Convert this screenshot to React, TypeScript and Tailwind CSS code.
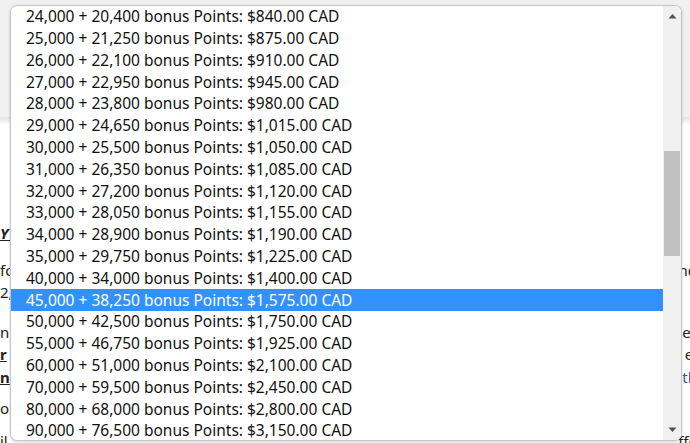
import React from 'react';

const options = [
  '24,000 + 20,400 bonus Points: $840.00 CAD',
  '25,000 + 21,250 bonus Points: $875.00 CAD',
  '26,000 + 22,100 bonus Points: $910.00 CAD',
  '27,000 + 22,950 bonus Points: $945.00 CAD',
  '28,000 + 23,800 bonus Points: $980.00 CAD',
  '29,000 + 24,650 bonus Points: $1,015.00 CAD',
  '30,000 + 25,500 bonus Points: $1,050.00 CAD',
  '31,000 + 26,350 bonus Points: $1,085.00 CAD',
  '32,000 + 27,200 bonus Points: $1,120.00 CAD',
  '33,000 + 28,050 bonus Points: $1,155.00 CAD',
  '34,000 + 28,900 bonus Points: $1,190.00 CAD',
  '35,000 + 29,750 bonus Points: $1,225.00 CAD',
  '40,000 + 34,000 bonus Points: $1,400.00 CAD',
  '45,000 + 38,250 bonus Points: $1,575.00 CAD',
  '50,000 + 42,500 bonus Points: $1,750.00 CAD',
  '55,000 + 46,750 bonus Points: $1,925.00 CAD',
  '60,000 + 51,000 bonus Points: $2,100.00 CAD',
  '70,000 + 59,500 bonus Points: $2,450.00 CAD',
  '80,000 + 68,000 bonus Points: $2,800.00 CAD',
  '90,000 + 76,500 bonus Points: $3,150.00 CAD',
];

const selected = 13;

// page text peeking out on both sides of the open list
const pageRows = [
  { h: 'h-[97px]', left: '', right: '' },
  { h: 'h-[22px]', left: <span className="font-bold italic underline">Y A</span>, right: '' },
  { h: 'h-[15px]', left: '', right: '' },
  { h: 'h-[22px]', left: 'fo', right: 'nd' },
  { h: 'h-[22px]', left: '2,', right: '' },
  { h: 'h-[18px]', left: '', right: '' },
  { h: 'h-[22px]', left: 'nis', right: 'er' },
  { h: 'h-[22px]', left: <span className="font-bold underline">r</span>, right: 'ei' },
  { h: 'h-[24px]', left: <span className="font-bold underline">n</span>, right: <span className="text-[#1a5c9a]">th</span> },
  { h: 'h-[8px]', left: '', right: '' },
  { h: 'h-[22px]', left: 'or', right: '' },
  { h: 'h-[11px]', left: '', right: '' },
  { h: 'h-[22px]', left: 'il', right: 'ffe' },
];

export default function App() {
  return (
    <div className="relative w-[690px] h-[443px] overflow-hidden bg-white text-[#222]" style={{ fontFamily: '"Noto Sans", "Open Sans", sans-serif' }}>
      {/* page behind the dropdown */}
      <div className="h-[117px] bg-[#f0f0f0]" />
      <div className="h-[8px] bg-gradient-to-b from-[#e2e2e2] to-white" />
      <div className="flex flex-col w-[697px] text-[15px] leading-[22px]">
        {pageRows.map((r, i) => (
          <div key={i} className={`${r.h} shrink-0 flex items-center justify-between`}>
            <span>{r.left}</span>
            <span>{r.right}</span>
          </div>
        ))}
      </div>

      {/* open select list */}
      <div className="absolute left-[10px] top-[5px] w-[672px] h-[436px] bg-white border border-[#c6c6c6] rounded-[7px] shadow-[0_1px_3px_rgba(0,0,0,0.18)] overflow-hidden flex">
        <div className="flex-1 flex flex-col">
          {options.map((o, i) => (
            <div
              key={i}
              className={`h-[21.8px] shrink-0 flex items-center pl-[15px] text-[15.5px] whitespace-nowrap ${
                i === selected ? 'bg-[#3391ff] text-white' : 'text-[#111]'
              }`}
            >
              {o}
            </div>
          ))}
        </div>
        <div className="w-[18px] bg-[#f0f0f0] flex flex-col items-center">
          <div className="h-[20px] flex items-center justify-center">
            <svg width="9" height="6" viewBox="0 0 9 6"><path d="M0.5 5.5 L4.5 1 L8.5 5.5 Z" fill="#505050" /></svg>
          </div>
          <div className="h-[125px]" />
          <div className="w-[16px] h-[105px] bg-[#c1c1c1]" />
          <div className="flex-1" />
          <div className="h-[20px] flex items-center justify-center">
            <svg width="9" height="6" viewBox="0 0 9 6"><path d="M0.5 0.5 L4.5 5 L8.5 0.5 Z" fill="#505050" /></svg>
          </div>
        </div>
      </div>
    </div>
  );
}
